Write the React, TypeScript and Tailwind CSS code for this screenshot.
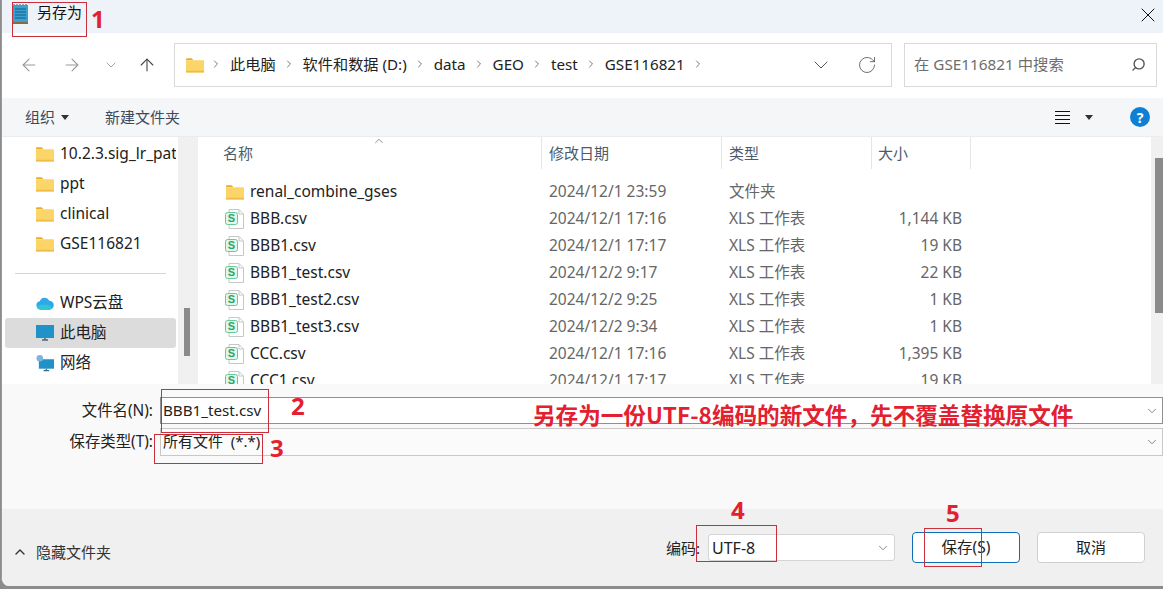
import { ArrowLeft, ArrowRight, ArrowUp, ChevronDown, ChevronRight, ChevronUp, RotateCw, Search, X } from 'lucide-react';

const FONT = '[font-family:"Noto_Sans","Noto_Sans_CJK_SC",sans-serif]';

const crumbs = ['此电脑', '软件和数据 (D:)', 'data', 'GEO', 'test', 'GSE116821'];

const files = [
  { name: 'BBB.csv', date: '2024/12/1 17:16', size: '1,144 KB' },
  { name: 'BBB1.csv', date: '2024/12/1 17:17', size: '19 KB' },
  { name: 'BBB1_test.csv', date: '2024/12/2 9:17', size: '22 KB' },
  { name: 'BBB1_test2.csv', date: '2024/12/2 9:25', size: '1 KB' },
  { name: 'BBB1_test3.csv', date: '2024/12/2 9:34', size: '1 KB' },
  { name: 'CCC.csv', date: '2024/12/1 17:16', size: '1,395 KB' },
  { name: 'CCC1.csv', date: '2024/12/1 17:17', size: '19 KB' },
];

function FolderIcon() {
  return (
    <svg width="18" height="16" viewBox="0 0 19 16" className="shrink-0">
      <path d="M0 2a1 1 0 0 1 1-1h5l2 2H0z" fill="#e5ae2e" />
      <path d="M0 3h18a1 1 0 0 1 1 1v11a1 1 0 0 1-1 1H1a1 1 0 0 1-1-1z" fill="#fbd568" />
      <path d="M0 14h19v1a1 1 0 0 1-1 1H1a1 1 0 0 1-1-1z" fill="#eebd48" />
    </svg>
  );
}

function SheetIcon() {
  return (
    <svg width="19" height="20" viewBox="0 0 19 20" className="shrink-0">
      <path d="M4 .5h10l4.500 4.500v14.500H4z" fill="#fff" stroke="#c4c8c6" />
      <path d="M14 .5V5h4.500" fill="none" stroke="#c4c8c6" />
      <rect x="0.500" y="3.500" width="12" height="12" rx="2" fill="#e3f6ea" stroke="#6cc796" />
      <text x="6.500" y="13" textAnchor="middle" fontSize="11" fontWeight="700" fill="#2ba565" fontFamily="Liberation Sans">S</text>
    </svg>
  );
}

function Caret() {
  return <span className="w-0 h-0 border-x-[4px] border-x-transparent border-t-[5px] border-t-[#333]" />;
}

function Mark({ className, label, labelClass }: { className: string; label: string; labelClass: string }) {
  return (
    <>
      <div className={`absolute border border-[#c9303c] ${className}`} />
      <span className={`absolute text-[24px] leading-none font-bold text-[#e3202f] [font-family:"Open_Sans",sans-serif] ${labelClass}`}>{label}</span>
    </>
  );
}

function SideItem({ label, icon, active }: { label: string; icon: React.ReactNode; active?: boolean }) {
  return (
    <div className={`h-[30px] w-[171px] ml-[3px] pl-[31px] flex items-center gap-[6px] rounded-[3px] whitespace-nowrap overflow-hidden ${active ? 'bg-[#dcdcdc]' : ''}`}>
      {icon}
      <span className="text-[15.500px] text-[#222]">{label}</span>
    </div>
  );
}

export default function App() {
  return (
    <div className={`relative w-[1163px] h-[589px] overflow-hidden bg-[#8c8c8c] ${FONT}`}>
      <div className="h-[586px] ml-px border-l border-l-[#9a9a9a] rounded-bl-[8px] overflow-hidden flex flex-col bg-white">
        {/* Title bar */}
        <div className="h-[33px] bg-[#eef3f9] flex items-center justify-between pl-[10px] pr-[3px]">
          <div className="flex items-center gap-2 -mt-[5px]">
            <svg width="17" height="21" viewBox="0 0 17 21">
              <rect x="1" y="1" width="15" height="19" fill="#3aa0cf" />
              <rect x="1" y="18" width="15" height="2" fill="#8a6a3c" />
              <path d="M2 1v-1M5 1v-1M8 1v-1M11 1v-1M14 1v-1" stroke="#555" />
              <path d="M3 5h11M3 8h11M3 11h11M3 14h11" stroke="#0f5f8c" />
            </svg>
            <span className="text-[15px] text-[#111] -mt-[3px]">另存为</span>
          </div>
          <X size={24} strokeWidth={1} className="text-[#111] -mt-[3px]" />
        </div>

        {/* Address row */}
        <div className="h-[65px] flex items-center pl-[17px] pr-[5px] -translate-y-px">
          <ArrowLeft size={20} strokeWidth={1.300} className="text-[#999]" />
          <ArrowRight size={20} strokeWidth={1.300} className="text-[#999] ml-[23px]" />
          <ChevronDown size={16} strokeWidth={1.300} className="text-[#999] ml-[21px]" />
          <ArrowUp size={20} strokeWidth={1.300} className="text-[#444] ml-[18px]" />
          <div className="ml-[17px] w-[718px] h-[44px] border border-[#d9d9d9] flex items-center pl-[11px] pr-[14px]">
            <FolderIcon />
            <div className="flex items-center ml-[6px] flex-1 text-[15.200px] text-[#222]">
              {crumbs.map((c) => (
                <span key={c} className="flex items-center">
                  <ChevronRight size={12} strokeWidth={1.600} className="text-[#555] mr-[8px]" />
                  <span className="mr-[7px] whitespace-nowrap">{c}</span>
                </span>
              ))}
              <ChevronRight size={12} strokeWidth={1.600} className="text-[#555]" />
            </div>
            <ChevronDown size={24} strokeWidth={1} className="text-[#555]" />
            <RotateCw size={20} strokeWidth={1} className="text-[#555] ml-[24px]" />
          </div>
          <div className="ml-[12px] w-[253px] h-[44px] border border-[#d9d9d9] flex items-center justify-between pl-[9px] pr-[10px]">
            <span className="text-[15.300px] text-[#6e6e6e]">在 GSE116821 中搜索</span>
            <Search size={15} strokeWidth={2.200} className="text-[#555] -scale-x-100" />
          </div>
        </div>

        {/* Toolbar */}
        <div className="h-[38px] bg-[#f4f6f8] flex items-center pl-[23px] pr-[13px] text-[15px] text-[#3c4a5c]">
          <span>组织</span>
          <span className="ml-[6px] flex"><Caret /></span>
          <span className="ml-[36px]">新建文件夹</span>
          <svg width="15" height="14" viewBox="0 0 15 14" className="ml-auto">
            <path d="M0 1.500h15M0 5.500h15M0 9.500h15M0 13.500h15" stroke="#111" />
          </svg>
          <span className="ml-[15px] mr-[37px] flex"><Caret /></span>
          <span className="w-5 h-5 rounded-full bg-[#0f7fd6] text-white text-[14px] font-bold flex items-center justify-center">?</span>
        </div>

        {/* Main */}
        <div className="h-[248px] flex border-t border-t-[#ececec] overflow-hidden">
          <div className="w-[176px] shrink-0 pt-[2px]">
            <SideItem label="10.2.3.sig_lr_pathway" icon={<FolderIcon />} />
            <SideItem label="ppt" icon={<FolderIcon />} />
            <SideItem label="clinical" icon={<FolderIcon />} />
            <SideItem label="GSE116821" icon={<FolderIcon />} />
            <div className="h-px w-[151px] ml-[13px] my-[14px] bg-[#d5d5d5]" />
            <SideItem
              label="WPS云盘"
              icon={
                <svg width="18" height="14" viewBox="0 0 19 14" className="shrink-0">
                  <path d="M5 14a4.500 4.500 0 0 1-1-8.900A5.500 5.500 0 0 1 14 4.500a4.700 4.700 0 0 1 0 9.500z" fill="#2fa8e8" />
                  <path d="M1 11c3-3 9-3 14-1 2 1 2 3 0 4H5c-2 0-3-1-4-3z" fill="#2fc4d8" />
                </svg>
              }
            />
            <SideItem
              label="此电脑"
              active
              icon={
                <svg width="18" height="17" viewBox="0 0 18 17" className="shrink-0">
                  <rect x="0" y="0" width="18" height="13" fill="#1f93c7" />
                  <path d="M6 15h6M9 13v2" stroke="#4a6a7a" strokeWidth="1.500" />
                </svg>
              }
            />
            <SideItem
              label="网络"
              icon={
                <svg width="18" height="19" viewBox="0 0 19 19" className="shrink-0">
                  <rect x="3" y="5" width="16" height="10" fill="#1f93c7" />
                  <circle cx="4" cy="4" r="3.500" fill="#7fb6d8" />
                  <path d="M8 17h6M11 15v2" stroke="#4a6a7a" strokeWidth="1.500" />
                </svg>
              }
            />
          </div>

          <div className="w-[20px] shrink-0 bg-[#f0f0f0] pt-[171px] pl-[6px]">
            <div className="w-[6px] h-[48px] bg-[#8a8a8a]" />
          </div>

          <div className="flex-1 min-w-0 text-[15.500px]">
            <div className="grid grid-cols-[343px_180px_150px_100px] h-[32px] text-[15px] text-[#4b5a6c] relative">
              <span className="pl-[25px] flex items-center">名称</span>
              <span className="pl-[7px] flex items-center border-l border-l-[#e5e5e5]">修改日期</span>
              <span className="pl-[7px] flex items-center border-l border-l-[#e5e5e5]">类型</span>
              <span className="pl-[6px] flex items-center border-x border-x-[#e5e5e5]">大小</span>
              <ChevronUp size={14} strokeWidth={1.200} className="absolute left-[174px] -top-[3px] text-[#666]" />
            </div>
            <div className="pt-[9px]">
              <div className="grid grid-cols-[343px_180px_150px_100px] h-[27px] items-center text-[#666]">
                <span className="pl-[28px] flex items-center gap-[6px] text-[#222]"><FolderIcon />renal_combine_gses</span>
                <span className="pl-2">2024/12/1 23:59</span>
                <span className="pl-2">文件夹</span>
                <span />
              </div>
              {files.map((f) => (
                <div key={f.name} className="grid grid-cols-[343px_180px_150px_100px] h-[27px] items-center text-[#666]">
                  <span className="pl-[27px] flex items-center gap-[6px] text-[#222]"><SheetIcon />{f.name}</span>
                  <span className="pl-2">{f.date}</span>
                  <span className="pl-2">XLS 工作表</span>
                  <span className="text-right pr-[9px]">{f.size}</span>
                </div>
              ))}
            </div>
          </div>

          <div className="w-[12px] shrink-0 bg-[#f0f0f0] pt-[21px] pl-[4px]">
            <div className="w-[8px] h-[155px] bg-[#8a8a8a]" />
          </div>
        </div>

        {/* Form */}
        <div className="h-[125px] bg-[#f9f9f9] pt-[13px] text-[15.400px] text-[#222]">
          <div className="flex items-center h-[27px]">
            <span className="w-[151px] text-right">文件名(N):</span>
            <div className="ml-[7px] flex-1 h-[27px] bg-white border border-[#8f8f8f] flex items-center justify-between pl-[2px] pr-[3px]">
              <span className="text-[15.200px]">BBB1_test.csv</span>
              <ChevronDown size={14} strokeWidth={1.200} className="text-[#555]" />
            </div>
          </div>
          <div className="flex items-center h-[28px] mt-[4px]">
            <span className="w-[151px] text-right">保存类型(T):</span>
            <div className="ml-[7px] flex-1 h-[28px] bg-[#fbfbfb] border border-[#c8c8c8] flex items-center justify-between pl-[2px] pr-[3px]">
              <span className="-mt-[2px] text-[15px] whitespace-pre">所有文件  (*.*)</span>
              <ChevronDown size={14} strokeWidth={1.200} className="text-[#555]" />
            </div>
          </div>
        </div>

        {/* Footer */}
        <div className="h-[77px] bg-[#f0f0f0] flex items-center pl-[10px] pr-[18px] text-[15px] text-[#222]">
          <ChevronUp size={16} strokeWidth={2} className="text-[#333] mt-[9px]" />
          <span className="ml-[8px] mt-[9px] text-[#333]">隐藏文件夹</span>
          <span className="ml-auto mt-[2px]">编码:</span>
          <div className="ml-[8px] w-[187px] h-[27px] bg-white border border-[#d4d4d4] rounded-[3px] flex items-center justify-between pl-[3px] pr-[4px]">
            <span className="text-[16px]">UTF-8</span>
            <ChevronDown size={14} strokeWidth={1.200} className="text-[#555]" />
          </div>
          <button className="ml-[17px] w-[108px] h-[31px] bg-white border border-[#0f6cb8] rounded-[4px] text-[15.500px]">保存(S)</button>
          <button className="ml-[17px] w-[108px] h-[31px] bg-white border border-[#d0d0d0] rounded-[4px]">取消</button>
        </div>
      </div>

      {/* Red annotations drawn over the screenshot */}
      <Mark className="left-[12px] top-[2px] w-[75px] h-[35px]" label="1" labelClass="left-[91px] top-[7px]" />
      <Mark className="left-[161px] top-[389px] w-[108px] h-[44px]" label="2" labelClass="left-[291px] top-[394px]" />
      <Mark className="left-[154px] top-[434px] w-[109px] h-[30px]" label="3" labelClass="left-[270px] top-[436px]" />
      <Mark className="left-[696px] top-[525px] w-[81px] h-[37px]" label="4" labelClass="left-[731px] top-[498px]" />
      <Mark className="left-[924px] top-[528px] w-[58px] h-[39px]" label="5" labelClass="left-[946px] top-[501px]" />
      <span className={`absolute left-[533px] top-[402px] text-[22.600px] leading-[26px] font-bold text-[#e3202f] whitespace-nowrap [font-family:"Noto_Sans_CJK_SC",sans-serif]`}>
        另存为一份UTF-8编码的新文件，先不覆盖替换原文件
      </span>
    </div>
  );
}
